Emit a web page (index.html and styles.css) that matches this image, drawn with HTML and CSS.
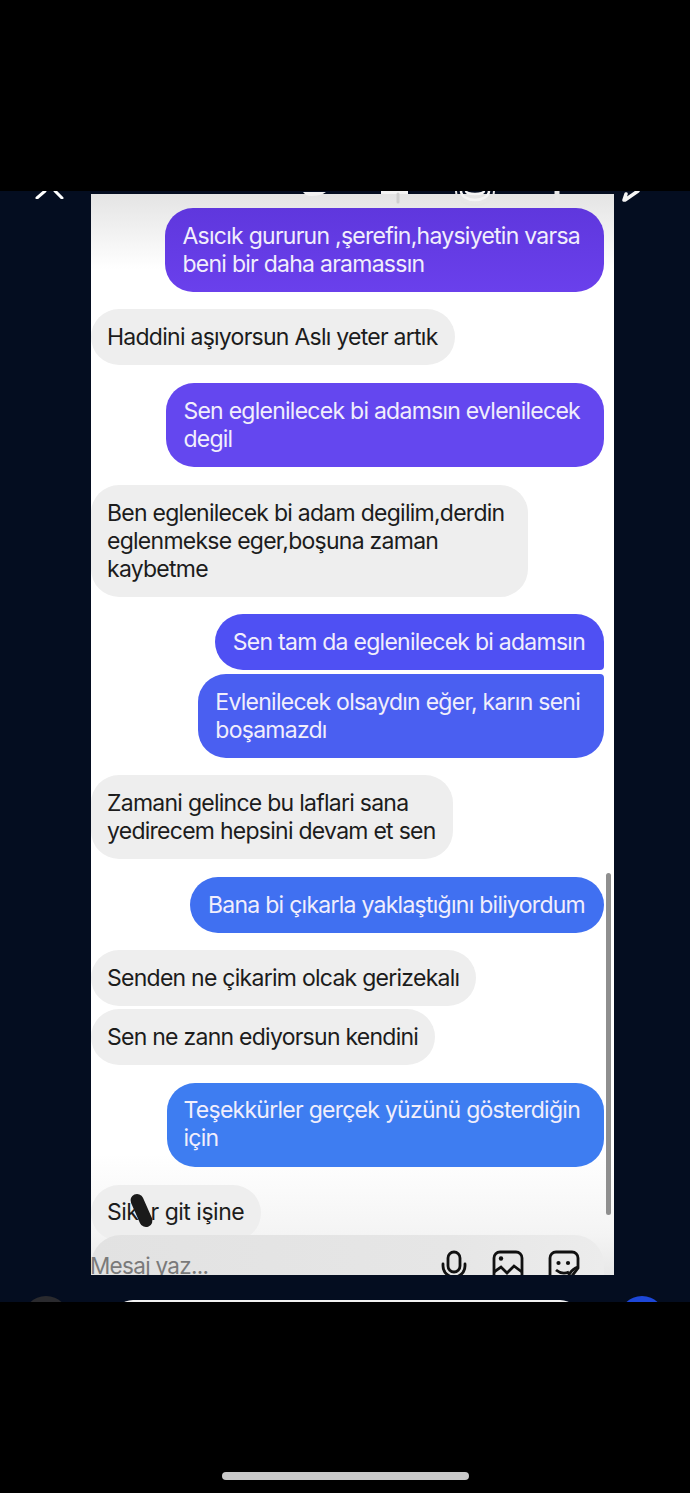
FILE: index.html
```html
<!DOCTYPE html>
<html lang="tr">
<head>
<meta charset="utf-8">
<title>Mesajlar</title>
<link rel="stylesheet" href="styles.css">
</head>
<body>
<div class="black-top"></div>
<main class="stage">
  <svg class="peek peek-x" viewBox="0 0 30 8" width="30" height="8"><path d="M2 7 L10 0 M20 0 L27 7" stroke="#fff" stroke-width="3" fill="none" stroke-linecap="round"/></svg>
  <svg class="peek peek-a" viewBox="0 0 24 6" width="24" height="6"><path d="M0 1 H23 Q18 5 8 5 Q3 5 0 1 Z" fill="#f2f2f2"/></svg>
  <svg class="peek peek-b" viewBox="0 0 30 16" width="30" height="16"><path d="M1 1.5 H28" stroke="#f4f4f4" stroke-width="3"/><path d="M18 3 V11" stroke="#cfcfcf" stroke-width="3" stroke-linecap="round" fill="none"/></svg>
  <svg class="peek peek-c" viewBox="0 0 40 16" width="40" height="16"><path d="M1 0 A19 14 0 0 0 39 0" stroke="#e6e6e6" stroke-width="2" fill="none"/><path d="M6 0 A14 9 0 0 0 34 0" stroke="#f4f4f4" stroke-width="2.5" fill="none"/><path d="M11 0 A9 3 0 0 0 29 0" stroke="#f4f4f4" stroke-width="2.5" fill="none"/></svg>
  <svg class="peek peek-d" viewBox="0 0 10 14" width="10" height="14"><path d="M5 0 V10" stroke="#e8e8e8" stroke-width="5" stroke-linecap="round"/></svg>
  <svg class="peek peek-e" viewBox="0 0 22 14" width="22" height="14"><path d="M4 9 L6 3 M18 0 L5 9" stroke="#f4f4f4" stroke-width="3.5" fill="none" stroke-linecap="round"/></svg>

  <section class="panel">
    <div class="msg out violet1 wrap m14">Asıcık gururun ,şerefin,haysiyetin varsa<br>beni bir daha aramassın</div>
    <div class="msg in m17">Haddini aşıyorsun Aslı yeter artık</div>
    <div class="msg out violet2 wrap m18">Sen eglenilecek bi adamsın evlenilecek<br>degil</div>
    <div class="msg in wrap-in m18">Ben eglenilecek bi adam degilim,derdin<br>eglenmekse eger,boşuna zaman<br>kaybetme</div>
    <div class="msg out indigo1 m17 corner-b">Sen tam da eglenilecek bi adamsın</div>
    <div class="msg out indigo2 wrap m4 corner-t">Evlenilecek olsaydın eğer, karın seni<br>boşamazdı</div>
    <div class="msg in m17">Zamani gelince bu laflari sana<br>yedirecem hepsini devam et sen</div>
    <div class="msg out blue1 m18">Bana bi çıkarla yaklaştığını biliyordum</div>
    <div class="msg in m17">Senden ne çikarim olcak gerizekalı</div>
    <div class="msg in m3">Sen ne zann ediyorsun kendini</div>
    <div class="msg out blue2 wrap nudge m18">Teşekkürler gerçek yüzünü gösterdiğin<br>için</div>
    <div class="msg in nudge m18 last">Sik<span class="scribble"></span><span class="hidden-gap">ti</span>r git işine</div>
    <div class="composer">
      <span class="placeholder">Mesaj yaz...</span>
      <span class="tools">
        <svg class="mic" viewBox="0 0 26 34" width="26" height="34"><rect x="7" y="2" width="12" height="20" rx="6" fill="none" stroke="#111" stroke-width="2.8"/><path d="M2 14 V16 A11 11 0 0 0 24 16 V14 M13 27 V34" fill="none" stroke="#111" stroke-width="2.8" stroke-linecap="round"/></svg>
        <svg viewBox="0 0 32 34" width="32" height="34"><rect x="2" y="2" width="28" height="36" rx="6" fill="none" stroke="#111" stroke-width="2.8"/><circle cx="9" cy="8.5" r="2.2" fill="#111"/><path d="M2 22 L9 17 L15 23 L22 16 L30 22" fill="none" stroke="#111" stroke-width="2.8"/></svg>
        <svg viewBox="0 0 32 34" width="32" height="34"><path d="M8 2 H24 A6 6 0 0 1 30 8 V18 L18 34 H8 A6 6 0 0 1 2 28 V8 A6 6 0 0 1 8 2 Z" fill="none" stroke="#111" stroke-width="2.8"/><circle cx="10.5" cy="13" r="2.1" fill="#111"/><circle cx="20" cy="13" r="2.1" fill="#111"/><path d="M8 20 Q14 25 21 22 M30 17 Q21 20 19 31" fill="none" stroke="#111" stroke-width="2.8"/></svg>
      </span>
    </div>
    <span class="scrollbar"></span>
  </section>
  <div class="footer-peek">
    <span class="peek-round dark"></span>
    <span class="peek-field"></span>
    <span class="peek-round blue"></span>
  </div>
</main>
<div class="black-bottom"><span class="home"></span></div>
</body>
</html>
```
FILE: styles.css
```css
* { box-sizing: border-box; }
html, body { margin: 0; height: 100%; background: #000; }
body {
  width: 690px;
  height: 1493px;
  overflow: hidden;
  display: flex;
  flex-direction: column;
  font-family: "Inter", "Liberation Sans", sans-serif;
}
.black-top { height: 191px; background: #000; flex: none; }
.stage {
  position: relative;
  height: 1111px;
  flex: none;
  background: #040d20;
  padding: 3px 0 0 91px;
}
.panel {
  position: relative;
  width: 523px;
  height: 1081px;
  overflow: hidden;
  display: flex;
  flex-direction: column;
  align-items: flex-start;
  background: linear-gradient(#e4e4e4 0, #fff 75px, #fff 960px, #f4f4f4 1040px, #e8e8e8 100%);
}
.msg {
  flex: none;
  font-size: 23px;
  letter-spacing: -0.74px;
  line-height: 28px;
  padding: 14px 17px 14px 16px;
  border-radius: 28px;
  white-space: nowrap;
}
.in { background: #eeeeee; color: #1c1c1c; }
.out { align-self: flex-end; margin-right: 10px; color: #f1eefc; padding: 14px 19px 14px 18px; }
.wrap { padding-left: 17px; padding-right: 24px; }
.wrap-in { padding-right: 24px; }
.nudge { padding-top: 13px; padding-bottom: 15px; }
.violet1 { background: linear-gradient(#5f37dd, #6a40ec); }
.violet2 { background: #6447ef; }
.indigo1 { background: #4f50f3; }
.indigo2 { background: #4a5ff1; }
.blue1 { background: #4070f1; }
.blue2 { background: #3e7df1; }
.corner-b { border-bottom-right-radius: 4px; }
.corner-t { border-top-right-radius: 4px; }
.m14 { margin-top: 14px; }
.m17 { margin-top: 17px; }
.m18 { margin-top: 18px; }
.m4 { margin-top: 4px; }
.m3 { margin-top: 3px; }
.last { position: relative; padding-right: 17px; letter-spacing: -0.5px; }
.scribble {
  position: absolute;
  left: 44px;
  top: 8px;
  width: 13px;
  height: 35px;
  border-radius: 7px;
  background: #1a1a1a;
  transform: rotate(-24deg);
}
.hidden-gap { color: transparent; }
.composer {
  flex: none;
  width: 513px;
  height: 60px;
  margin-top: -6px;
  position: relative;
  z-index: 1;
  background: linear-gradient(90deg, #e2e2e2, #e6e6e6 70%, #ececec);
  border-radius: 30px 30px 0 0;
  display: flex;
  align-items: flex-start;
  justify-content: space-between;
}
.placeholder { color: #7a7a7a; font-size: 22.5px; letter-spacing: -0.7px; line-height: 28px; margin: 17px 0 0 -1px; }
.tools { display: flex; gap: 24px; margin: 15px 24px 0 0; align-items: flex-start; }
.tools svg { flex: none; }
.tools .mic { margin-right: 1px; }
.scrollbar {
  position: absolute;
  right: 3px;
  top: 679px;
  width: 5px;
  height: 342px;
  border-radius: 3px;
  background: #8f8f8f;
}
.peek { position: absolute; top: 0; z-index: 2; }
.peek-x { left: 35px; }
.peek-a { left: 303px; }
.peek-b { left: 380px; }
.peek-c { left: 455px; }
.peek-d { left: 552px; }
.peek-e { left: 620px; }
.footer-peek {
  position: absolute;
  left: 0; right: 0; bottom: 0;
  height: 6px;
  overflow: hidden;
}
.peek-round { position: absolute; top: 0; width: 46px; height: 46px; border-radius: 50%; }
.peek-round.dark { left: 23px; background: #2a2a2e; }
.peek-round.blue { left: 619px; background: #1d47d8; }
.peek-field {
  position: absolute; left: 113px; top: 4px; width: 467px; height: 40px;
  background: #f2f2f2; border-radius: 20px;
}
.black-bottom {
  flex: none;
  height: 191px;
  background: #000;
  display: flex;
  justify-content: center;
  padding-top: 170px;
}
.home { width: 247px; height: 8px; border-radius: 4px; background: #c9c9c9; }
```
